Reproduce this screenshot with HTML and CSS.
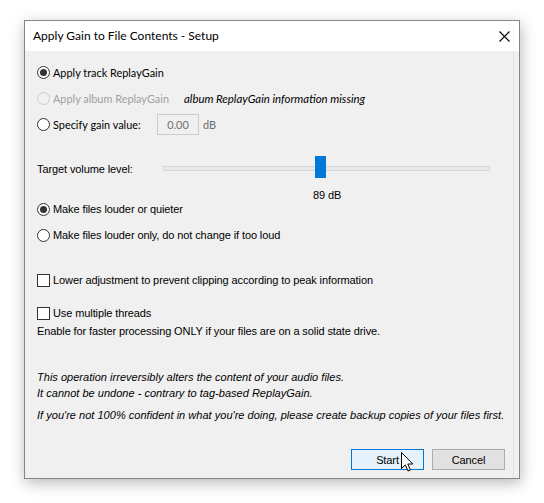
FILE: index.html
```html
<!DOCTYPE html>
<html lang="en">
<head>
<meta charset="utf-8">
<title>Apply Gain to File Contents - Setup</title>
<link rel="stylesheet" href="styles.css">
</head>
<body>
<div class="window">
  <div class="titlebar">
    <span class="title">Apply Gain to File Contents - Setup</span>
    <svg class="close" width="11" height="11" viewBox="0 0 11 11"><path d="M0.5 0.5L10.5 10.5M10.5 0.5L0.5 10.5" stroke="#000" stroke-width="1.1" fill="none"/></svg>
  </div>
  <div class="client">
    <div class="row r1">
      <span class="opt seg"><span class="radio checked"></span>Apply track ReplayGain</span>
    </div>
    <div class="row r2">
      <span class="opt seg disabled w-album"><span class="radio dis"></span>Apply album ReplayGain</span>
      <span class="note">album ReplayGain information missing</span>
    </div>
    <div class="row r3">
      <span class="opt seg w-gain"><span class="radio"></span>Specify gain value:</span>
      <span class="edit seg">0.00</span>
      <span class="unit seg">dB</span>
    </div>
    <div class="row r4">
      <span class="tlabel tah">Target volume level:</span>
      <div class="slider"><div class="track"></div><div class="thumb"></div></div>
    </div>
    <div class="dbval tah">89 dB</div>
    <div class="row r5">
      <span class="opt tah"><span class="radio checked"></span>Make files louder or quieter</span>
    </div>
    <div class="row r6">
      <span class="opt tah"><span class="radio"></span>Make files louder only, do not change if too loud</span>
    </div>
    <div class="row c1">
      <span class="opt tah"><span class="check"></span>Lower adjustment to prevent clipping according to peak information</span>
    </div>
    <div class="row c2">
      <span class="opt tah"><span class="check"></span>Use multiple threads</span>
    </div>
    <div class="row t1 tah">Enable for faster processing ONLY if your files are on a solid state drive.</div>
    <div class="row i1 tah ital">This operation irreversibly alters the content of your audio files.</div>
    <div class="row i2 tah ital">It cannot be undone - contrary to tag-based ReplayGain.</div>
    <div class="row i3 tah ital">If you're not 100% confident in what you're doing, please create backup copies of your files first.</div>
    <div class="buttons">
      <span class="btn tah default">Start</span>
      <span class="btn tah">Cancel</span>
    </div>
  </div>
</div>
<svg class="cursor" width="14" height="21" viewBox="0 0 14 21"><path d="M0.5 0.5 L0.5 16.5 L4.3 12.9 L7 19 L9.4 18 L6.8 12 L11.8 12 Z" fill="#fff" stroke="#000" stroke-width="1" stroke-linejoin="miter"/></svg>
</body>
</html>
```

FILE: styles.css
```css
html, body {
  margin: 0;
  padding: 0;
  background: #ffffff;
}

body {
  position: relative;
  width: 544px;
  height: 503px;
  overflow: hidden;
}

.window {
  box-sizing: border-box;
  margin: 20px 0 0 24px;
  width: 496px;
  height: 459px;
  border: 1px solid #858585;
  background: #f0f0f0;
  box-shadow: 1px 4px 14px rgba(0, 0, 0, 0.28);
  display: flex;
  flex-direction: column;
}

.titlebar {
  height: 30px;
  flex: none;
  background: #ffffff;
  display: flex;
  align-items: center;
  justify-content: space-between;
  padding: 0 9px 0 8px;
}

.title {
  font-family: "Lato", "Noto Sans", sans-serif;
  font-size: 12px;
  color: #000;
  margin-top: -1px;
}

.close {
  display: block;
  margin-top: 1px;
}

.client {
  flex: 1;
  margin-right: 5px;
  border-right: 1px solid #e2e2e2;
  padding: 13px 8px 0 12px;
  color: #000;
}

.seg {
  font-family: "Lato", "Noto Sans", sans-serif;
  font-size: 10.9px;
}

.tah {
  font-family: "Liberation Sans", Arial, sans-serif;
  font-size: 11px;
  letter-spacing: -0.1px;
}

.ital {
  font-style: italic;
  letter-spacing: 0.02px;
}

.row {
  height: 16px;
  display: flex;
  align-items: center;
  white-space: nowrap;
}

.r2, .r3, .r6 { margin-top: 10px; }
.r4 { margin-top: 29px; }
.r5 { margin-top: 0; }
.c1 { margin-top: 29px; }
.c2 { margin-top: 17px; }
.t1 { margin-top: 2px; }
.i1 { margin-top: 30px; }
.i2 { margin-top: 0; }
.i3 { margin-top: 6px; }

.opt {
  display: flex;
  align-items: center;
}

.w-album { width: 147px; flex: none; }
.w-gain { width: 120px; flex: none; }

.radio {
  box-sizing: border-box;
  width: 13px;
  height: 13px;
  border: 1px solid #333333;
  border-radius: 50%;
  background: #ffffff;
  margin-right: 3px;
  display: flex;
  align-items: center;
  justify-content: center;
  flex: none;
}

.radio.checked::after {
  content: "";
  width: 7px;
  height: 7px;
  border-radius: 50%;
  background: #333333;
}

.radio.dis {
  border-color: #cccccc;
  background: #f0f0f0;
}

.disabled {
  color: #a0a0a0;
}

.check {
  box-sizing: border-box;
  width: 13px;
  height: 13px;
  border: 1px solid #333333;
  background: #ffffff;
  margin-right: 3px;
  flex: none;
}

.note {
  font-family: "Lato", "Noto Sans", sans-serif;
  font-size: 11.4px;
  font-style: italic;
}

.edit {
  box-sizing: border-box;
  width: 42px;
  height: 21px;
  border: 1px solid #cccccc;
  background: #f0f0f0;
  color: #6d6d6d;
  display: flex;
  align-items: center;
  justify-content: center;
  flex: none;
}

.unit {
  margin-left: 4px;
  color: #6d6d6d;
}

.tlabel {
  width: 126px;
  flex: none;
}

.slider {
  position: relative;
  width: 327px;
  height: 22px;
  align-self: flex-start;
  margin-top: -5px;
  padding-top: 10px;
  box-sizing: border-box;
}

.track {
  box-sizing: border-box;
  height: 5px;
  background: #e7eaea;
  border: 1px solid #d6d6d6;
}

.thumb {
  position: absolute;
  left: 152px;
  top: 0;
  width: 11px;
  height: 22px;
  background: #0078d7;
}

.dbval {
  height: 12px;
  line-height: 12px;
  margin-top: 12px;
  padding-left: 276px;
}

.buttons {
  display: flex;
  justify-content: flex-end;
  gap: 8px;
  margin-top: 26px;
}

.btn {
  box-sizing: border-box;
  width: 73px;
  height: 21px;
  border: 1px solid #adadad;
  background: #e1e1e1;
  display: flex;
  align-items: center;
  justify-content: center;
}

.btn.default {
  border-color: #0078d7;
  background: #e5f1fb;
}

.cursor {
  position: absolute;
  left: 401px;
  top: 452px;
}
```
